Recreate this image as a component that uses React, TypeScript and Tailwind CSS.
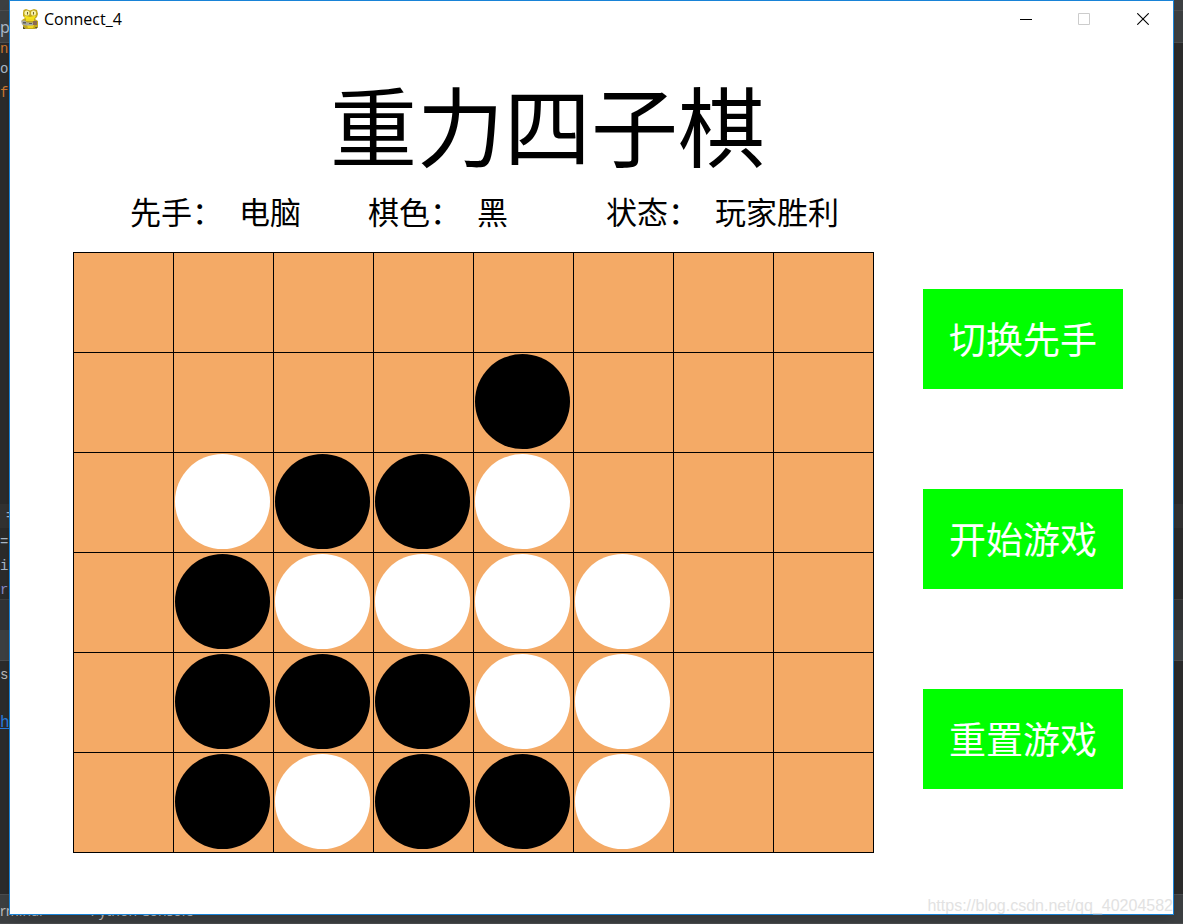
import React from "react";

// b = black disc, w = white disc, . = empty
const board = [
  "........",
  "....b...",
  ".wbbw...",
  ".bwwww..",
  ".bbbww..",
  ".bwbbw..",
];

const status = [
  { label: "先手：", value: "电脑" },
  { label: "棋色：", value: "黑" },
  { label: "状态：", value: "玩家胜利" },
];

const actions = ["切换先手", "开始游戏", "重置游戏"];

function SnakeIcon() {
  return (
    <svg width="20" height="22" viewBox="0 0 20 22" aria-hidden="true">
      <path d="M3 5 3.5 2 6 1 10 2.5 14 1 17 2 18 6 17 9 15 11 18 13 18 19 15 21H6L3 18 2 12 5 10 3 8Z" fill="#c2a81c" />
      <path d="M4 7.5 10 9l6-1.5-2 3.5H6z" fill="#f5e21b" />
      <path d="M6 11h8v2H6zM7 17h7l-1 3H8z" fill="#f0d820" />
      <circle cx="7" cy="5" r="2.6" fill="#f6f0a8" />
      <circle cx="13.5" cy="5" r="2.6" fill="#f6f0a8" />
      <path d="M7 4h1v2.5H7zM13 4h1v2.5h-1z" fill="#6a6230" />
      <path d="M1 12.5h4l2 2h6v3H6l-4-1z" fill="#a8a8a0" />
      <path d="M3 14h3v1.5H3zM9 15h3v1H9z" fill="#5c5c58" />
      <path d="M13 13h4v4h-4z" fill="#8a6a50" />
      <path d="M3 18l3 3h-3zM15 19h3l-2 2z" fill="#5e5418" />
    </svg>
  );
}

// Code editor left open behind the game window
function Editor() {
  return (
    <div className="absolute inset-0 flex flex-col overflow-hidden bg-[#2b2b2b] font-['Liberation_Mono'] text-sm leading-6 text-[#a9b7c6]">
      <div className="h-[11px] shrink-0 border-b border-[#4b4d4f] bg-[#3c3f41]" />
      <div className="h-8 shrink-0 border-b border-[#4b4d4f] bg-[#3c3f41] pt-1 font-['Noto_Sans'] text-base">
        <p>py</p>
      </div>
      <div className="h-[461px] shrink-0">
        <p className="h-3 overflow-hidden leading-3 text-[#cc7832]">n</p>
        <p className="pt-0.5">ol</p>
        <p className="text-[#cc7832]">f</p>
      </div>
      <p className="h-6 bg-[#323232] pl-1.5">=</p>
      <div className="h-[71px] shrink-0 pt-0.5">
        <p>=</p>
        <p>in</p>
        <p className="text-[#8888c6]">ra</p>
      </div>
      <div className="h-[31px] shrink-0 border-t border-[#3f3f3f] bg-[#313335]" />
      <div className="h-[31px] shrink-0 border-b border-[#4b4d4f] bg-[#3c3f41]" />
      <div className="flex-1 pt-0.5">
        <p className="text-[#bbbbbb]">s</p>
        <a href="#" className="mt-6 block text-base leading-6 text-[#287bde] underline">
          h
        </a>
      </div>
      <div className="flex h-[30px] shrink-0 items-center gap-12 border-y border-[#4b4d4f] bg-[#3c3f41] pt-1 font-['Noto_Sans'] text-sm text-[#bbbbbb]">
        <span>rminal</span>
        <span>Python Console</span>
      </div>
    </div>
  );
}

function TitleBar() {
  return (
    <header className="flex h-9 items-center justify-between pl-2.5">
      <div className="flex items-center gap-1">
        <SnakeIcon />
        <span className="font-['Open_Sans',sans-serif] text-base">Connect_4</span>
      </div>
      <div className="flex h-full">
        <button aria-label="Minimize" className="grid w-[59px] place-items-center">
          <svg width="12" height="12" viewBox="0 0 12 12">
            <path d="M0 6.5h12" stroke="#000" />
          </svg>
        </button>
        <button aria-label="Maximize" disabled className="grid w-[58px] place-items-center">
          <svg width="12" height="12" viewBox="0 0 12 12">
            <path d="M.5.5h11v11H.5z" fill="none" stroke="#ccc" />
          </svg>
        </button>
        <button aria-label="Close" className="grid w-[60px] place-items-center">
          <svg width="12" height="12" viewBox="0 0 12 12">
            <path d="M.3.3l11.4 11.4M11.7.3.3 11.7" stroke="#000" strokeWidth="1.1" />
          </svg>
        </button>
      </div>
    </header>
  );
}

function Board() {
  return (
    <div className="grid flex-1 grid-cols-8 border-t border-l border-black bg-[#f4aa66]">
      {board.join("").split("").map((cell, i) => (
        <div key={i} className="aspect-square border-r border-b border-black pt-px pr-[3px] pb-[3px] pl-px">
          {cell === "b" && <div className="size-full rounded-full bg-black" />}
          {cell === "w" && <div className="size-full rounded-full bg-white" />}
        </div>
      ))}
    </div>
  );
}

function App() {
  return (
    <div className="relative flex min-h-screen px-[9px] pb-[9px]">
      <Editor />
      <div className="relative flex-1 border border-[#1883d7] bg-white font-['Noto_Sans_CJK_SC',sans-serif] text-black shadow-lg">
        <TitleBar />
        <main>
          <h1 className="pt-[38px] pl-80 text-[87px] leading-[96px]">重力四子棋</h1>
          <div className="flex pt-4 pl-[120px] text-[31px] leading-[48px]">
            {status.map((item) => (
              <p key={item.label} className="flex min-w-[238px] gap-4">
                <span>{item.label}</span>
                <span>{item.value}</span>
              </p>
            ))}
          </div>
          <div className="flex items-start gap-[49px] pt-[17px] pr-[50px] pl-[63px]">
            <Board />
            <div className="flex w-[200px] flex-col gap-[100px] pt-[37px]">
              {actions.map((action) => (
                <button key={action} className="h-[100px] bg-[#00ff00] text-[37px] text-white">
                  {action}
                </button>
              ))}
            </div>
          </div>
        </main>
        <a href="#" className="absolute right-0 bottom-0 font-['Liberation_Sans'] text-base leading-4 text-[#e2e2e2]">
          https://blog.csdn.net/qq_40204582
        </a>
      </div>
    </div>
  );
}

export default App;
